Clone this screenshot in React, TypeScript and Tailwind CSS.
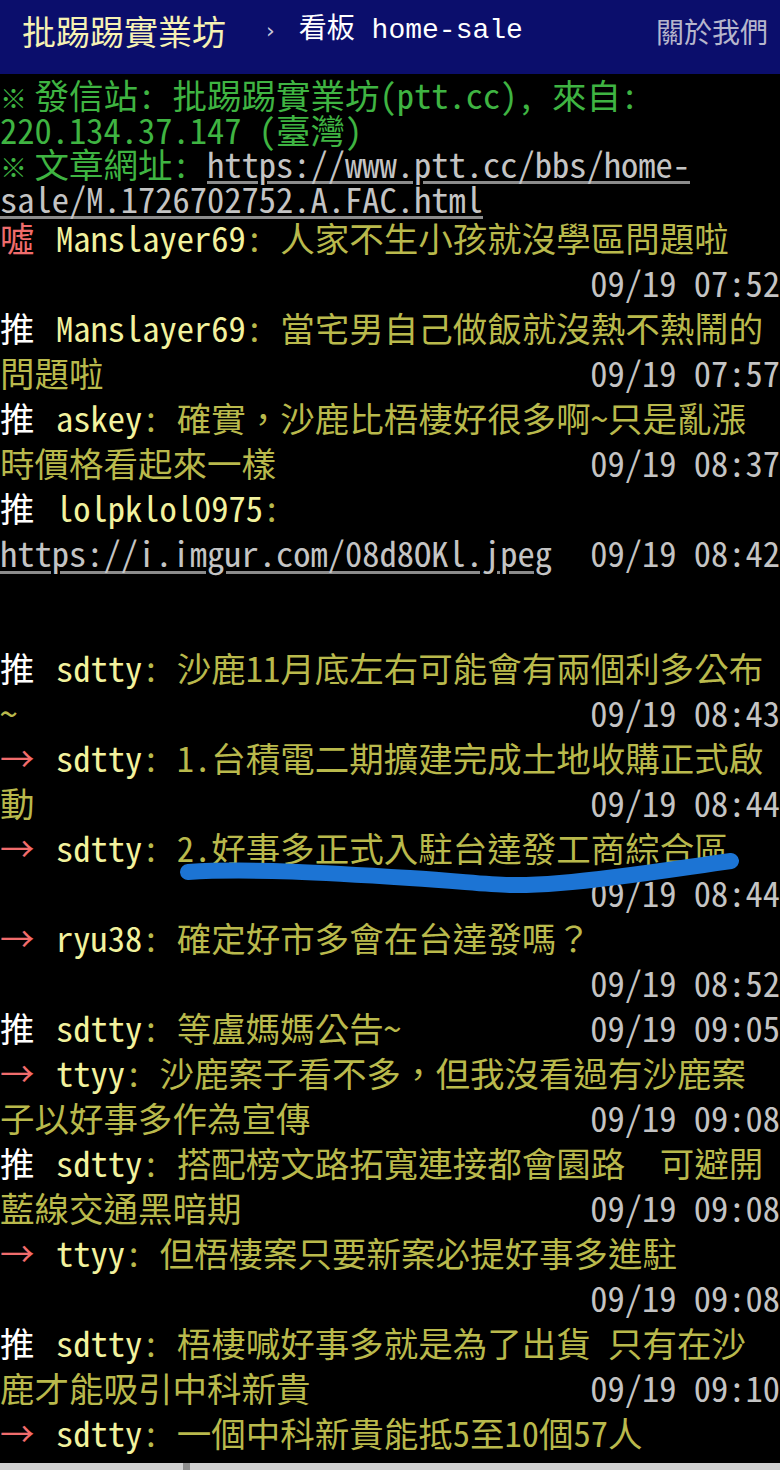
import React from "react";

const mono = {
  fontFamily:
    '"Noto Sans Mono CJK TC", "Noto Sans Mono CJK SC", "Noto Sans CJK TC", monospace',
};

type Row =
  | { k: "push"; tag: "推" | "→" | "噓"; user: string; text: string; time?: string }
  | { k: "cont"; text: string; time?: string; link?: boolean }
  | { k: "time"; time: string }
  | { k: "gap" };

const rows: Row[] = [
  { k: "push", tag: "噓", user: "Manslayer69", text: "人家不生小孩就沒學區問題啦" },
  { k: "time", time: "09/19 07:52" },
  { k: "push", tag: "推", user: "Manslayer69", text: "當宅男自己做飯就沒熱不熱鬧的" },
  { k: "cont", text: "問題啦", time: "09/19 07:57" },
  { k: "push", tag: "推", user: "askey", text: "確實，沙鹿比梧棲好很多啊~只是亂漲" },
  { k: "cont", text: "時價格看起來一樣", time: "09/19 08:37" },
  { k: "push", tag: "推", user: "lolpklol0975", text: "" },
  { k: "cont", text: "https://i.imgur.com/08d8OKl.jpeg", time: "09/19 08:42", link: true },
  { k: "gap" },
  { k: "push", tag: "推", user: "sdtty", text: "沙鹿11月底左右可能會有兩個利多公布" },
  { k: "cont", text: "~", time: "09/19 08:43" },
  { k: "push", tag: "→", user: "sdtty", text: "1.台積電二期擴建完成土地收購正式啟" },
  { k: "cont", text: "動", time: "09/19 08:44" },
  { k: "push", tag: "→", user: "sdtty", text: "2.好事多正式入駐台達發工商綜合區" },
  { k: "time", time: "09/19 08:44" },
  { k: "push", tag: "→", user: "ryu38", text: "確定好市多會在台達發嗎？" },
  { k: "time", time: "09/19 08:52" },
  { k: "push", tag: "推", user: "sdtty", text: "等盧媽媽公告~", time: "09/19 09:05" },
  { k: "push", tag: "→", user: "ttyy", text: "沙鹿案子看不多，但我沒看過有沙鹿案" },
  { k: "cont", text: "子以好事多作為宣傳", time: "09/19 09:08" },
  { k: "push", tag: "推", user: "sdtty", text: "搭配榜文路拓寬連接都會園路　可避開" },
  { k: "cont", text: "藍線交通黑暗期", time: "09/19 09:08" },
  { k: "push", tag: "→", user: "ttyy", text: "但梧棲案只要新案必提好事多進駐" },
  { k: "time", time: "09/19 09:08" },
  { k: "push", tag: "推", user: "sdtty", text: "梧棲喊好事多就是為了出貨 只有在沙" },
  { k: "cont", text: "鹿才能吸引中科新貴", time: "09/19 09:10" },
  { k: "push", tag: "→", user: "sdtty", text: "一個中科新貴能抵5至10個57人" },
];

const Time = ({ t }: { t?: string }) =>
  t ? <span className="text-[#c4c4c4]">{t}</span> : null;

function PushRow({ row }: { row: Row }) {
  if (row.k === "gap") return <div className="h-[70px]" />;
  const base = "flex h-[45px] items-center justify-between whitespace-pre leading-[45px]";
  if (row.k === "time") {
    return (
      <div className={base}>
        <span />
        <Time t={row.time} />
      </div>
    );
  }
  if (row.k === "cont") {
    return (
      <div className={base}>
        <span
          className={
            row.link
              ? "text-[#c4c4c4] underline decoration-[#8c8c8c] decoration-[3px] underline-offset-[4px]"
              : "text-[#b9b94c]"
          }
        >
          {row.text}
        </span>
        <Time t={row.time} />
      </div>
    );
  }
  return (
    <div className={base}>
      <span>
        <span
          className={`inline-block w-[56px] ${row.tag === "推" ? "text-white" : "text-[#f06c6c]"}`}
        >
          {row.tag}
        </span>
        <span className="text-[#f2f29e]">{row.user}</span>
        <span className="text-[#b9b94c]">: {row.text}</span>
      </span>
      <Time t={row.time} />
    </div>
  );
}

const Mark = () => (
  <span className="inline-block w-[34.5px] text-[27px] leading-none">※</span>
);

export default function App() {
  return (
    <div className="relative flex h-[1470px] w-[780px] flex-col overflow-hidden bg-black">
      <header className="flex h-[74px] shrink-0 items-center bg-[#0b0e6c] pb-[12px] pl-[22px] pr-[12px]">
        <span
          className="text-[34px] leading-none text-[#f6f2b4]"
          style={{ fontFamily: '"Noto Sans CJK TC", sans-serif' }}
        >
          批踢踢實業坊
        </span>
        <span className="ml-[40px] text-[22px] leading-none text-[#c8c8d8]" style={{ fontFamily: '"DejaVu Sans", sans-serif' }}>
          ›
        </span>
        <span
          className="ml-[24px] whitespace-pre text-[28px] leading-none text-white"
          style={{ fontFamily: '"Liberation Mono", "Noto Sans CJK TC", monospace' }}
        >
          看板 home-sale
        </span>
        <span
          className="ml-auto text-[28px] leading-none text-[#b6b6cc]"
          style={{ fontFamily: '"Noto Sans CJK TC", sans-serif' }}
        >
          關於我們
        </span>
      </header>

      <main className="flex flex-1 flex-col pt-[3px] text-[34.5px]" style={mono}>
        <div className="whitespace-pre leading-[34.5px] text-[#3fb442]">
          <div>
            <Mark />發信站: 批踢踢實業坊(ptt.cc), 來自:
          </div>
          <div>220.134.37.147 (臺灣)</div>
          <div>
            <Mark />文章網址:{" "}
            <span className="text-[#c4c4c4] underline decoration-[#8c8c8c] decoration-[3px] underline-offset-[3px]">
              https://www.ptt.cc/bbs/home-
            </span>
          </div>
          <div>
            <span className="text-[#c4c4c4] underline decoration-[#8c8c8c] decoration-[3px] underline-offset-[3px]">
              sale/M.1726702752.A.FAC.html
            </span>
          </div>
        </div>

        {rows.map((r, i) => (
          <PushRow key={i} row={r} />
        ))}

        <div className="mt-auto flex h-[7px] shrink-0 bg-[#d2d2d2]">
          <div className="ml-[183px] w-[7px] bg-[#8e8e8e]" />
        </div>
      </main>

      <svg
        className="pointer-events-none absolute left-0 top-0"
        width="780"
        height="1470"
        viewBox="0 0 780 1470"
      >
        <path
          d="M188 872 C 250 868, 330 873, 410 878 S 500 888, 560 883 S 680 868, 731 861"
          fill="none"
          stroke="#1c74d4"
          strokeWidth="16"
          strokeLinecap="round"
        />
      </svg>
    </div>
  );
}
